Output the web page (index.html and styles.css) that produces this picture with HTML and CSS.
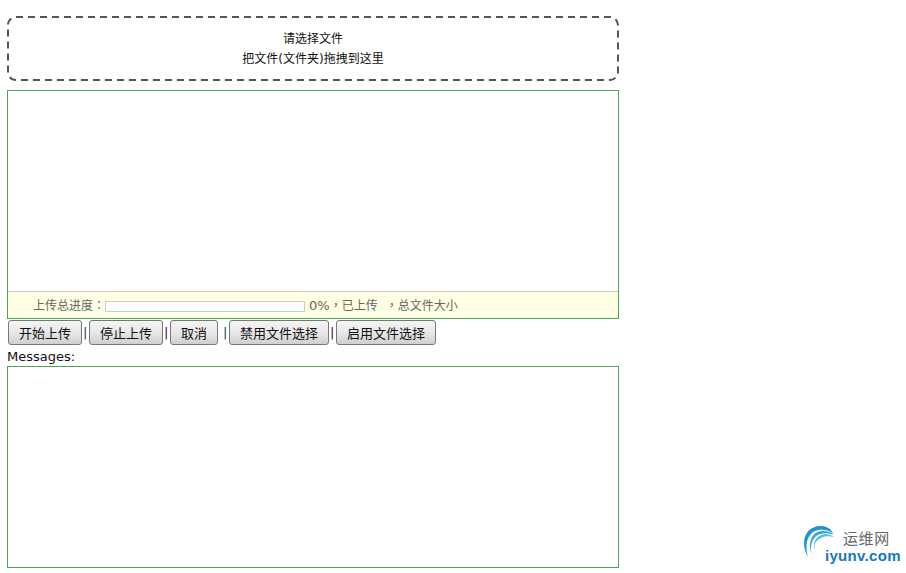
FILE: index.html
```html
<!DOCTYPE html>
<html lang="zh">
<head>
<meta charset="utf-8">
<title>上传</title>
<link rel="stylesheet" href="styles.css">
</head>
<body>
<main class="page">
  <div class="drop">
    <svg class="drop-outline" width="612" height="65" viewBox="0 0 612 65" fill="none" aria-hidden="true">
      <rect x="1" y="1" width="610" height="63" rx="8" stroke="#555" stroke-width="2" stroke-dasharray="7 5"/>
    </svg>
    <div>请选择文件</div>
    <div>把文件(文件夹)拖拽到这里</div>
  </div>
  <section class="queue">
    <div class="list"></div>
    <div class="status" lang="zh-Hant">
      <span class="label">上传总进度：</span><span class="bar"></span><span class="info"><span class="pct">0%</span>，已上传<span class="gap"></span>，总文件大小</span>
    </div>
  </section>
  <div class="actions">
    <button class="btn">开始上传</button><span class="sep s1">|</span>
    <button class="btn">停止上传</button><span class="sep s2">|</span>
    <button class="btn">取消</button><span class="sep s1 wide">|</span>
    <button class="btn">禁用文件选择</button><span class="sep s2">|</span>
    <button class="btn">启用文件选择</button>
  </div>
  <div class="msg-label">Messages:</div>
  <div class="messages"></div>
</main>
<aside class="logo">
  <svg class="logo-mark" width="42" height="42" viewBox="0 0 42 42" aria-hidden="true">
    <path fill="#1b95d6" d="M5 32C-3 19 1 1 18 1C23 1 27 3 30 8C25 5 20 4 15 5C5 7 1 19 5 32Z"/>
    <path fill="#2ba3de" d="M9 29C4 18 9 6 20 6C24 6 28 7 31 10C26 8 21 8 17 9C10 11 6 20 9 29Z"/>
    <path fill="#5bbce8" d="M12 26C9 18 13 10 22 9C25 9 28 10 31 12C26 11 21 11 18 13C13 15 10 20 12 26Z"/>
  </svg>
  <div class="logo-cn">运维网</div>
  <div class="logo-en">iyunv.com</div>
</aside>
</body>
</html>
```
FILE: styles.css
```css
html, body {
  margin: 0;
  padding: 0;
  background: #fff;
  height: 573px;
  overflow: hidden;
}
body {
  position: relative;
  font-family: "DejaVu Sans", Verdana, "Noto Sans CJK SC", sans-serif;
  font-size: 13px;
  color: #000;
}
.page {
  width: 612px;
  padding: 16px 0 0 7px;
}
.drop {
  position: relative;
  box-sizing: border-box;
  height: 64px;
  padding: 13px 0 0;
  text-align: center;
  font-family: "DejaVu Sans", "Noto Sans CJK SC", sans-serif;
  font-size: 12px;
  line-height: 20px;
  color: #111;
}
.drop-outline {
  position: absolute;
  left: 0;
  top: 0;
}
.queue {
  box-sizing: border-box;
  height: 229px;
  margin-top: 10px;
  border: 1px solid #4ca45c;
  display: flex;
  flex-direction: column;
}
.list { flex: 1; }
.status {
  box-sizing: border-box;
  height: 27px;
  border-top: 1px solid #ccc;
  background: #ffffe3;
  color: #666;
  display: flex;
  align-items: center;
  padding: 0 0 2px 25px;
  font-size: 12px;
  font-family: "DejaVu Sans", "Noto Sans CJK TC", sans-serif;
}
.bar {
  box-sizing: border-box;
  width: 200px;
  height: 11px;
  border: 1px solid #ccc;
  background: #fff;
  margin: 5px 4px 0 0;
}
.label, .info { white-space: pre; }
.pct { font-size: 13px; }
.gap {
  display: inline-block;
  width: 8px;
}
.actions {
  height: 26px;
  padding: 1px 0 0 1px;
  display: flex;
  align-items: flex-start;
  font-size: 13px;
}
.btn {
  box-sizing: border-box;
  height: 25px;
  padding: 0 10px;
  border: 1px solid #777;
  border-radius: 3px;
  background: linear-gradient(#f4f4f4, #e8e8e8 50%, #cfcfcf);
  font: 13px "Noto Sans CJK SC", sans-serif;
  color: #111;
}
.sep {
  box-sizing: border-box;
  width: 7px;
  padding-left: 1px;
  margin-top: 6px;
  font-size: 13px;
  line-height: 1;
}
.sep.wide {
  width: 11px;
  padding-left: 5px;
}
.s1 { color: #0f4f22; }
.s2 { color: #50005a; }
.msg-label {
  height: 20px;
  line-height: 21px;
  font-size: 13px;
  color: #111;
}
.messages {
  box-sizing: border-box;
  height: 202px;
  border: 1px solid #4ca45c;
}
.logo {
  position: absolute;
  left: 803px;
  top: 525px;
  width: 100px;
  height: 42px;
}
.logo-mark {
  position: absolute;
  left: 0;
  top: 0;
}
.logo-cn {
  position: absolute;
  left: 40px;
  top: 3px;
  font: 15px/20px "Noto Sans CJK SC", sans-serif;
  color: #666;
  letter-spacing: 0.6px;
}
.logo-en {
  position: absolute;
  left: 22px;
  top: 22px;
  font: bold 15px/18px "Liberation Sans", sans-serif;
  color: #1578c2;
  letter-spacing: 0.3px;
}
```
